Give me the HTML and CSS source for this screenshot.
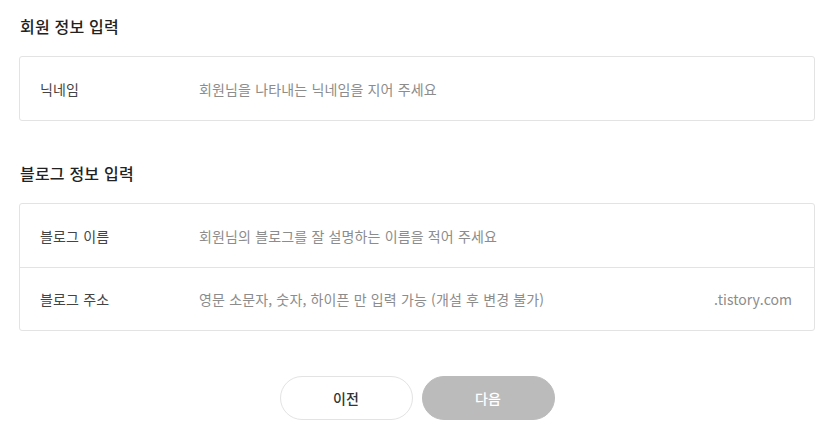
FILE: index.html
```html
<!DOCTYPE html>
<html lang="ko">
<head>
<meta charset="utf-8">
<link rel="stylesheet" href="styles.css">
</head>
<body>
<main class="page">
  <section class="section">
    <h2 class="section-title">회원 정보 입력</h2>
    <div class="card">
      <div class="row">
        <span class="label">닉네임</span>
        <span class="placeholder">회원님을 나타내는 닉네임을 지어 주세요</span>
      </div>
    </div>
  </section>
  <section class="section">
    <h2 class="section-title">블로그 정보 입력</h2>
    <div class="card">
      <div class="row">
        <span class="label">블로그 이름</span>
        <span class="placeholder">회원님의 블로그를 잘 설명하는 이름을 적어 주세요</span>
      </div>
      <div class="row">
        <span class="label">블로그 주소</span>
        <span class="placeholder">영문 소문자, 숫자, 하이픈 만 입력 가능 (개설 후 변경 불가)</span>
        <span class="suffix">.tistory.com</span>
      </div>
    </div>
  </section>
  <div class="actions">
    <button class="btn btn-prev" type="button">이전</button>
    <button class="btn btn-next" type="button">다음</button>
  </div>
</main>
</body>
</html>
```
FILE: styles.css
```css
* { box-sizing: border-box; }
html, body { margin: 0; padding: 0; background: #fff; }
body {
  font-family: "Noto Sans CJK KR", "Noto Sans", sans-serif;
  color: #222;
}
.page {
  width: 796px;
  margin-left: 19px;
  padding-top: 15px;
}
.section + .section { margin-top: 41px; }
.section-title {
  margin: 0 0 19px 1px;
  font-size: 16px;
  line-height: 22px;
  font-weight: 500;
  color: #222;
  letter-spacing: 0.2px;
}
.card {
  border: 1px solid #e3e3e3;
  border-radius: 3px;
}
.row {
  display: flex;
  align-items: center;
  height: 63px;
  padding: 0 22px 0 20px;
  font-size: 14px;
  letter-spacing: 0.15px;
}
.row + .row { border-top: 1px solid #e3e3e3; height: 63px; }
.label {
  width: 159px;
  flex: none;
  color: #444;
  font-weight: 400;
}
.placeholder {
  flex: 1;
  color: #8c8c8c;
}
.suffix { color: #8c8c8c; letter-spacing: 0; }
.actions {
  display: flex;
  justify-content: center;
  gap: 9px;
  margin-top: 45px;
}
.btn {
  width: 133px;
  height: 44px;
  border-radius: 22px;
  font-family: inherit;
  font-size: 14px;
  font-weight: 500;
  cursor: pointer;
}
.btn-prev {
  background: #fff;
  border: 1px solid #e3e3e3;
  color: #333;
}
.btn-next {
  background: #bbb;
  border: 1px solid #bbb;
  color: #fff;
}
```
